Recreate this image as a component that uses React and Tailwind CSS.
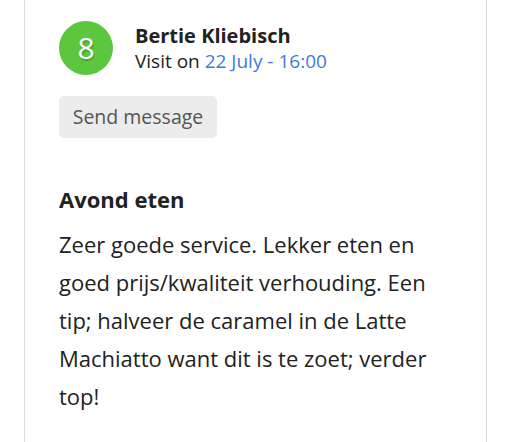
export default function App() {
  return (
    <div
      className="min-h-[442px] bg-white"
      style={{ fontFamily: '"Open Sans", sans-serif' }}
    >
      <div className="ml-[24px] w-[463px] min-h-[442px] border-x border-[#dcdcdc] bg-white px-[34px] pt-[21px]">
        <div className="flex items-center gap-[22px]">
          <div className="flex h-[54px] w-[54px] items-center justify-center rounded-full bg-[#5cc63f] text-[30px] leading-none text-white [text-shadow:1px_2px_1px_rgba(0,0,0,0.2)]">
            8
          </div>
          <div className="flex flex-col">
            <span className="text-[20px] leading-[26px] font-bold text-[#222]">
              Bertie Kliebisch
            </span>
            <span className="text-[19px] leading-[25px] text-[#222]">
              Visit on <span className="text-[#3d7be0]">22 July - 16:00</span>
            </span>
          </div>
        </div>

        <button className="mt-[21px] flex h-[42px] w-[158px] items-center justify-center rounded-[5px] bg-[#ececec] text-[19.5px] text-[#555]">
          Send message
        </button>

        <h3 className="mt-[48px] text-[22px] leading-[26px] font-bold text-[#222]">
          Avond eten
        </h3>
        <p className="mt-[13px] text-[22px] leading-[38px] text-[#222]">
          Zeer goede service. Lekker eten en goed prijs/kwaliteit verhouding.
          Een tip; halveer de caramel in de Latte Machiatto want dit is te
          zoet; verder top!
        </p>
      </div>
    </div>
  );
}
